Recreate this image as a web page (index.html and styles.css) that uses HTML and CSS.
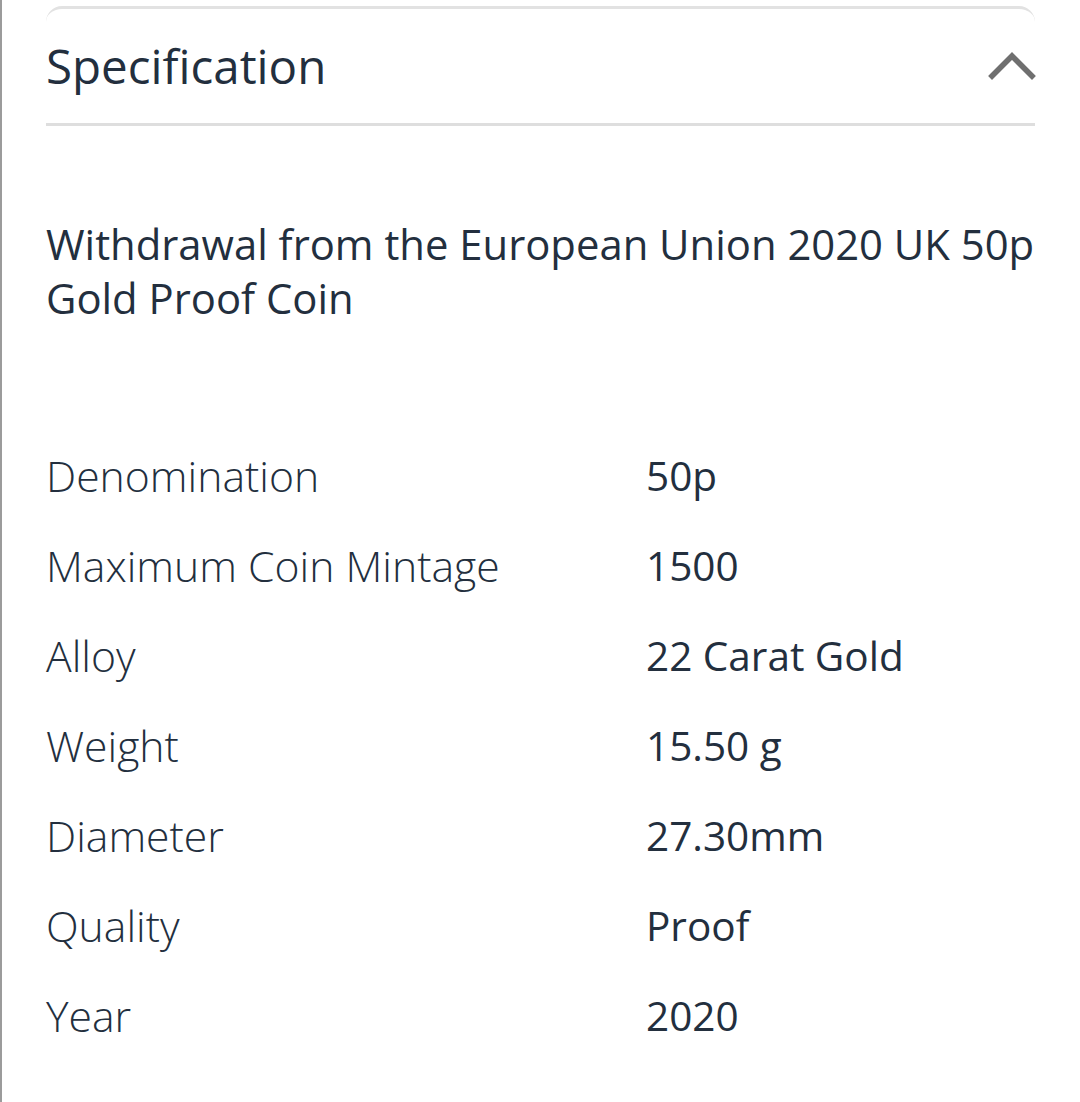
FILE: index.html
```html
<!DOCTYPE html>
<html lang="en">
<head>
<meta charset="utf-8">
<title>Specification</title>
<link rel="stylesheet" href="styles.css">
</head>
<body>
<div class="page">
  <section class="card">
    <header class="card-head">
      <h2 class="card-title">Specification</h2>
      <svg class="chevron" width="48" height="30" viewBox="0 0 48 30" aria-hidden="true">
        <polyline points="4,25 24,5 44,25" fill="none" stroke="#6f6f6f" stroke-width="5.5" stroke-linecap="square"/>
      </svg>
    </header>
    <p class="product-name">Withdrawal from the European Union 2020 UK 50p Gold Proof Coin</p>
    <dl class="specs">
      <div class="spec-row"><dt>Denomination</dt><dd>50p</dd></div>
      <div class="spec-row"><dt>Maximum Coin Mintage</dt><dd>1500</dd></div>
      <div class="spec-row"><dt>Alloy</dt><dd>22 Carat Gold</dd></div>
      <div class="spec-row"><dt>Weight</dt><dd>15.50 g</dd></div>
      <div class="spec-row"><dt>Diameter</dt><dd>27.30mm</dd></div>
      <div class="spec-row"><dt>Quality</dt><dd>Proof</dd></div>
      <div class="spec-row"><dt>Year</dt><dd>2020</dd></div>
    </dl>
  </section>
</div>
</body>
</html>
```
FILE: styles.css
```css
html, body {
  margin: 0;
  padding: 0;
  background: #ffffff;
}
body {
  font-family: "Open Sans", "Noto Sans", sans-serif;
  color: #232f3e;
}
.page {
  min-height: 1102px;
  border-left: 2px solid #9b9b9b;
  box-sizing: border-box;
  padding: 6px 0 0 44px;
}
.card {
  width: 989px;
  border-top: 3px solid #e2e2e2;
  border-radius: 16px 16px 0 0;
}
.card-head {
  display: flex;
  align-items: center;
  justify-content: space-between;
  height: 117px;
  border-bottom: 3px solid #dedede;
  box-sizing: border-box;
}
.card-title {
  margin: 0;
  font-size: 47.5px;
  font-weight: 400;
  line-height: 1;
}
.chevron {
  display: block;
  margin-right: -1px;
  margin-bottom: 1px;
}
.product-name {
  margin: 91px 0 0 0;
  font-size: 41.8px;
  line-height: 54px;
}
.specs {
  margin: 105px 0 0 0;
}
.spec-row {
  display: grid;
  grid-template-columns: 600px 1fr;
  height: 90px;
  align-items: center;
}
.spec-row dt {
  font-size: 42.7px;
  font-weight: 300;
}
.spec-row dd {
  margin: 0;
  font-size: 40.5px;
  font-weight: 400;
}
```
